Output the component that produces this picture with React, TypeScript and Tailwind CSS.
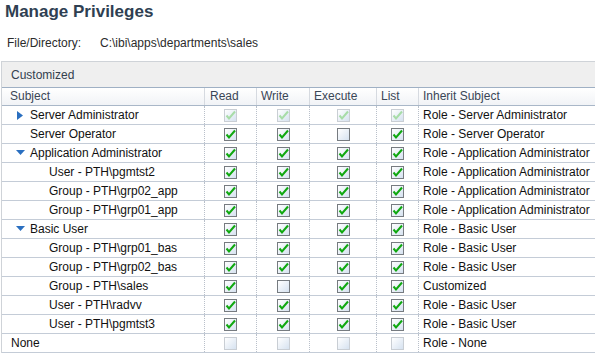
import React from "react";

type Row = {
  label: string;
  indent: 0 | 1 | 2;
  arrow?: "right" | "down";
  vals: (0 | 1)[];
  disabled?: boolean;
  inherit: string;
};

const rows: Row[] = [
  { label: "Server Administrator", indent: 1, arrow: "right", vals: [1, 1, 1, 1], disabled: true, inherit: "Role - Server Administrator" },
  { label: "Server Operator", indent: 1, vals: [1, 1, 0, 1], inherit: "Role - Server Operator" },
  { label: "Application Administrator", indent: 1, arrow: "down", vals: [1, 1, 1, 1], inherit: "Role - Application Administrator" },
  { label: "User - PTH\\pgmtst2", indent: 2, vals: [1, 1, 1, 1], inherit: "Role - Application Administrator" },
  { label: "Group - PTH\\grp02_app", indent: 2, vals: [1, 1, 1, 1], inherit: "Role - Application Administrator" },
  { label: "Group - PTH\\grp01_app", indent: 2, vals: [1, 1, 1, 1], inherit: "Role - Application Administrator" },
  { label: "Basic User", indent: 1, arrow: "down", vals: [1, 1, 1, 1], inherit: "Role - Basic User" },
  { label: "Group - PTH\\grp01_bas", indent: 2, vals: [1, 1, 1, 1], inherit: "Role - Basic User" },
  { label: "Group - PTH\\grp02_bas", indent: 2, vals: [1, 1, 1, 1], inherit: "Role - Basic User" },
  { label: "Group - PTH\\sales", indent: 2, vals: [1, 0, 1, 1], inherit: "Customized" },
  { label: "User - PTH\\radvv", indent: 2, vals: [1, 1, 1, 1], inherit: "Role - Basic User" },
  { label: "User - PTH\\pgmtst3", indent: 2, vals: [1, 1, 1, 1], inherit: "Role - Basic User" },
  { label: "None", indent: 0, vals: [0, 0, 0, 0], disabled: true, inherit: "Role - None" },
];

function Check({ on, disabled }: { on: boolean; disabled?: boolean }) {
  return (
    <div
      className={
        "w-[13px] h-[13px] border bg-gradient-to-br from-white to-[#d6e2f0] " +
        (disabled ? "border-[#c9ced4]" : "border-[#767b80]")
      }
    >
      {on && (
        <svg width="11" height="11" viewBox="0 0 11 11" className="block">
          <polyline
            points="1.5,5.5 4,8.5 10,1.5"
            fill="none"
            stroke={disabled ? "#a8dca8" : "#10a810"}
            strokeWidth="2"
          />
        </svg>
      )}
    </div>
  );
}

function Arrow({ dir }: { dir: "right" | "down" }) {
  return dir === "right" ? (
    <svg width="8" height="9" viewBox="0 0 8 9" className="block">
      <polygon points="1,0 7,4.5 1,9" fill="#2a6fc0" />
    </svg>
  ) : (
    <svg width="9" height="6" viewBox="0 0 9 6" className="block">
      <polygon points="0,0 9,0 4.5,5" fill="#2a6fc0" />
    </svg>
  );
}

const cols = "grid grid-cols-[203px_52px_53px_67px_42px_1fr]";

export default function App() {
  return (
    <div
      className="w-[595px] h-[356px] bg-white overflow-hidden text-[12px] text-[#111]"
      style={{ fontFamily: '"Liberation Sans", Arial, sans-serif' }}
    >
      <div className="pl-[5px] pt-[1px] h-[27px] text-[17px] font-bold text-[#2f3f52] leading-[22px]">
        Manage Privileges
      </div>
      <div className="flex h-[31px] items-center pl-[7px] text-[#2b2b2b]">
        <span className="w-[93px]">File/Directory:</span>
        <span>C:\ibi\apps\departments\sales</span>
      </div>
      <div className="mt-[3px] ml-[1px] border-l border-t border-[#cfd3d8]">
        <div className="h-[26px] bg-[#efefef] flex items-center pl-[9px] text-[#33404e] border-b border-[#9fb0c4]">
          Customized
        </div>
        <div className={cols + " h-[18px] bg-gradient-to-b from-white to-[#f1f3f6] border-b border-[#a9b7c8] text-[#3a4656] leading-[17px]"}>
          <div className="pl-[8px] border-r border-[#d6dae0]">Subject</div>
          <div className="pl-[5px] border-r border-[#d6dae0]">Read</div>
          <div className="pl-[4px] border-r border-[#d6dae0]">Write</div>
          <div className="pl-[4px] border-r border-[#d6dae0]">Execute</div>
          <div className="pl-[4px] border-r border-[#d6dae0]">List</div>
          <div className="pl-[4px]">Inherit Subject</div>
        </div>
        {rows.map((r, i) => (
          <div key={i} className={cols + " h-[19px] border-b border-[#c4ccd7] items-stretch"}>
            <div className="flex items-center border-r border-dotted border-[#b9c0ca]">
              <div
                className={
                  "flex items-center " +
                  (r.indent === 0 ? "pl-[9px]" : r.indent === 1 ? "pl-[14px]" : "pl-[47px]")
                }
              >
                {r.indent === 1 && (
                  <div className="w-[14px] flex items-center">
                    {r.arrow && <Arrow dir={r.arrow} />}
                  </div>
                )}
                <span>{r.label}</span>
              </div>
            </div>
            {r.vals.map((v, j) => (
              <div
                key={j}
                className="flex items-center justify-center border-r border-dotted border-[#b9c0ca]"
              >
                <Check on={v === 1} disabled={r.disabled} />
              </div>
            ))}
            <div className="flex items-center pl-[4px]">{r.inherit}</div>
          </div>
        ))}
      </div>
    </div>
  );
}
